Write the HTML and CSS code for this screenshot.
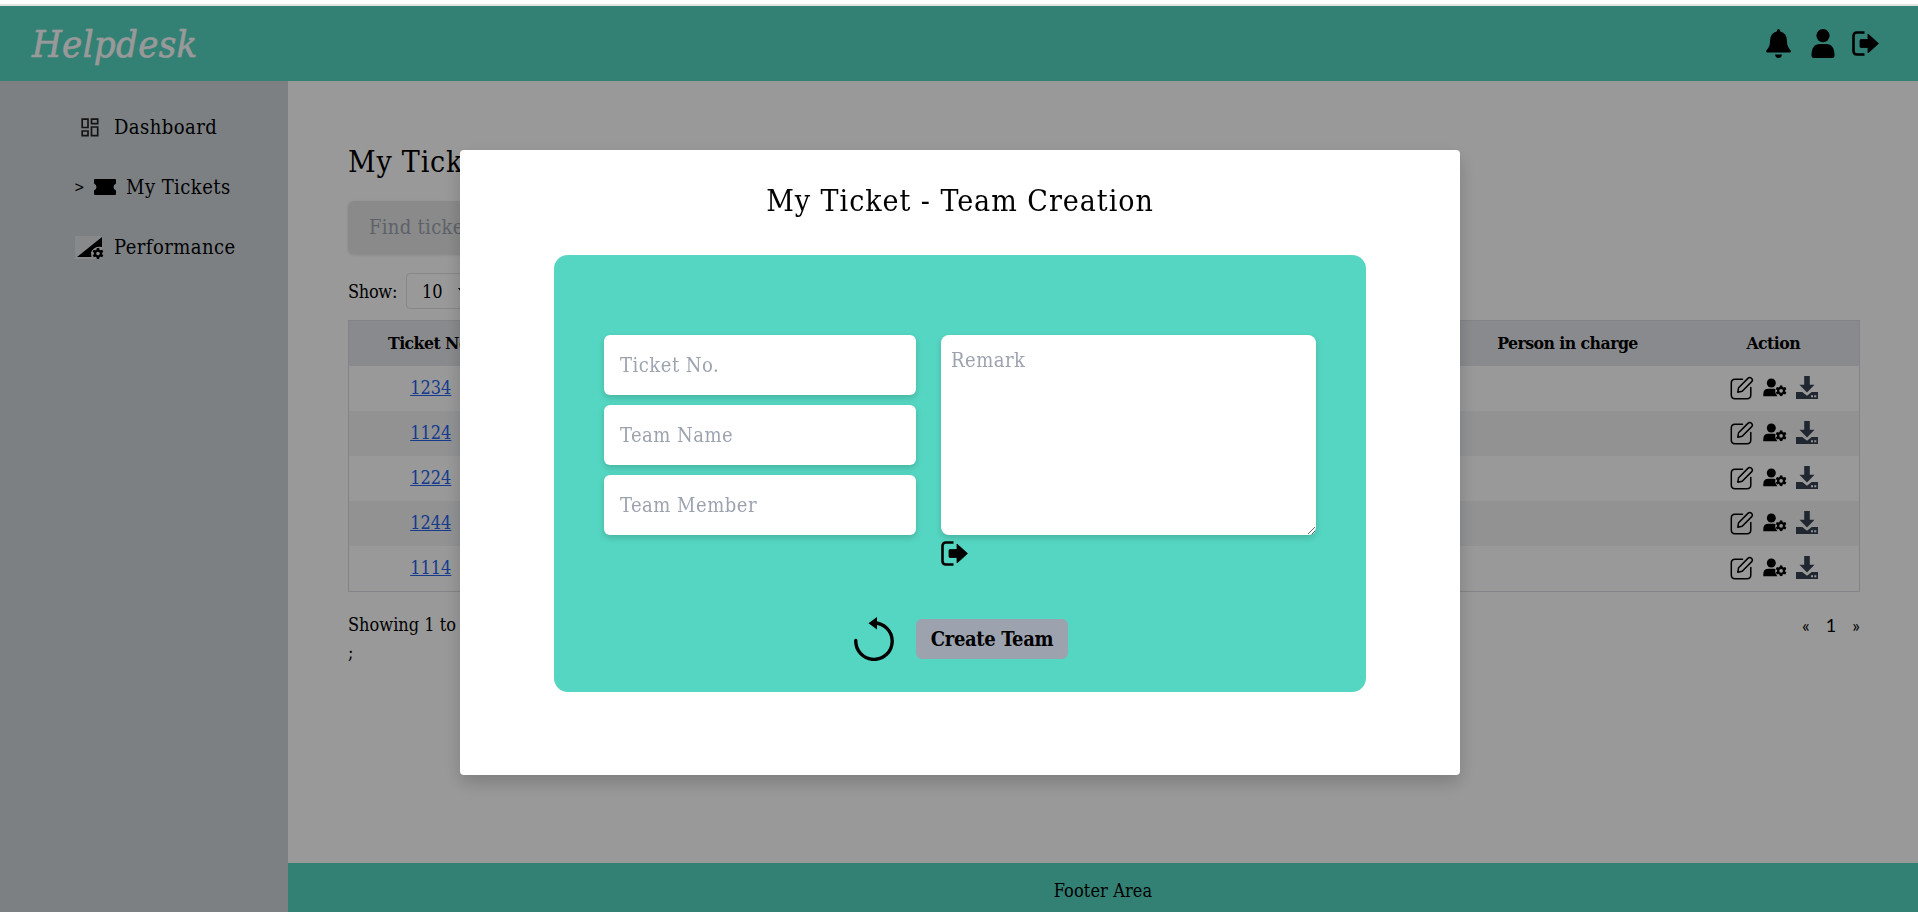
FILE: index.html
```html
<!DOCTYPE html>
<html lang="en">
<head>
<meta charset="utf-8">
<title>Helpdesk</title>
<link rel="stylesheet" href="styles.css">
</head>
<body>
<svg class="defs" width="0" height="0">
  <symbol id="i-logout" viewBox="0 0 27 25"><path d="M12.500 1.500H5Q1.500 1.500 1.500 5V20Q1.500 23.500 5 23.500H12.500" fill="none" stroke="#000" stroke-width="2.600"/><path d="M9 8.500H16V3L26.500 12.500 16 22V16.500H9Q8 16.500 8 15.500V9.500Q8 8.500 9 8.500Z" stroke="#000" stroke-linejoin="round" stroke-width=".8"/></symbol>
  <symbol id="i-edit" viewBox="0 0 24 24"><path d="M12.500 3.200H5Q1.300 3.200 1.300 7V19Q1.300 22.700 5 22.700H17Q20.800 22.700 20.800 19V11.500" fill="none" stroke="#000" stroke-width="1.500" stroke-linecap="round"/><path d="M7.800 16.200 8.600 11.700 17.900 2.400Q19.700 .6 21.500 2.300 23.300 4.100 21.500 5.900L12.200 15.300Z" fill="none" stroke="#000" stroke-width="1.500" stroke-linejoin="round"/></symbol>
  <symbol id="i-gear" viewBox="0 0 24 24"><path fill-rule="evenodd" d="M9.500 0h5l.8 3.600 2.300 1.300 3.500-1.100 2.500 4.300-2.700 2.500v2.800l2.700 2.500-2.500 4.300-3.500-1.100-2.300 1.300-.8 3.600h-5l-.8-3.600-2.300-1.300-3.500 1.100-2.500-4.300 2.700-2.500v-2.800L.4 8.100l2.500-4.300 3.500 1.100 2.300-1.300ZM12 8a4 4 0 1 0 0 8 4 4 0 0 0 0-8Z"/></symbol>
  <symbol id="i-users" viewBox="0 0 24 20"><circle cx="8.300" cy="5" r="4.500"/><path d="M.3 18.300V16Q.3 10.800 5.500 10.800H11Q12.500 10.800 12.600 11.500 11.300 14.500 14.500 18.300Z"/><use href="#i-gear" x="12.600" y="7.300" width="11" height="11"/></symbol>
  <symbol id="i-download" viewBox="0 0 22 23"><path d="M8.200 0h5.600v8.800h4.700L11 16.500 3.500 8.800h4.700Z"/><path fill-rule="evenodd" d="M0 16h6.300l4.700 3.800 4.700-3.800H22v7H0ZM15 19.300v1.900h2v-1.900ZM18.300 19.300v1.900h2v-1.900Z"/></symbol>
</svg>

<header class="topbar">
  <div class="brand">Helpdesk</div>
  <div class="topicons">
    <svg class="bell" width="25" height="29" viewBox="0 0 25 29"><path d="M12.500 0Q14.300 0 14.300 2.500 20.800 4 20.900 11.500 21 18 24.500 21.300 25.500 23.300 23.500 23.500H1.500Q-.5 23.300 .5 21.300 4 18 4.100 11.500 4.200 4 10.700 2.500 10.700 0 12.500 0Z"/><path d="M9 25.500h7Q15.500 29 12.500 29 9.500 29 9 25.500Z"/></svg>
    <svg width="24" height="29" viewBox="0 0 24 29"><circle cx="12" cy="6.600" r="6.600"/><path d="M.5 26.500Q.5 15 9 15H15Q23.500 15 23.500 26.500 23.500 29 21 29H3Q.5 29 .5 26.500Z"/></svg>
    <svg width="27" height="25"><use href="#i-logout"/></svg>
  </div>
</header>

<div class="shell">
  <nav class="sidebar">
    <a class="nav dash"><svg width="18" height="19" viewBox="0 0 18 19" fill="none" stroke="#222" stroke-width="1.700"><path d="M1.200 1.200H7V9.500H1.200ZM10.500 1.200H16.700V5.700H10.500ZM1.200 13H7V17.700H1.200ZM10.500 9H16.700V17.700H10.500Z"/></svg><span>Dashboard</span></a>
    <a class="nav tick"><b class="mark">&gt;</b><svg width="22" height="16" viewBox="0 0 22 16"><path d="M1 0h20Q22 0 22 1V4.500Q19.500 5.500 19.500 8T22 11.500V15Q22 16 21 16H1Q0 16 0 15V11.500Q2.500 10.500 2.500 8T0 4.500V1Q0 0 1 0Z"/></svg><span>My Tickets</span></a>
    <a class="nav perf"><svg width="29" height="23" viewBox="0 0 29 23"><path fill="#e3e5e8" d="M0 0h27v23H0Z"/><path d="M27 1V11Q18.500 10 16 16.500L16.500 21H2Z"/><use href="#i-gear" x="17" y="12" width="12" height="11"/></svg><span>Performance</span></a>
  </nav>

  <div class="content">
    <main class="page">
      <h1 class="heading">My Tickets</h1>
      <input class="search" placeholder="Find ticket">
      <div class="show"><span>Show:</span><div class="select"><span>10</span><svg width="9" height="6" viewBox="0 0 9 6"><path d="M0 0h9L4.500 6Z"/></svg></div></div>
      <table class="tickets">
        <thead><tr><th class="c-no">Ticket No.</th><th></th><th class="c-person"><span>Person in charge</span></th><th class="c-action">Action</th></tr></thead>
        <tbody>
          <tr><td><a>1234</a></td><td></td><td></td><td><div class="acts"><svg class="edit"><use href="#i-edit"/></svg><svg class="users"><use href="#i-users"/></svg><svg class="down"><use href="#i-download"/></svg></div></td></tr>
          <tr><td><a>1124</a></td><td></td><td></td><td><div class="acts"><svg class="edit"><use href="#i-edit"/></svg><svg class="users"><use href="#i-users"/></svg><svg class="down"><use href="#i-download"/></svg></div></td></tr>
          <tr><td><a>1224</a></td><td></td><td></td><td><div class="acts"><svg class="edit"><use href="#i-edit"/></svg><svg class="users"><use href="#i-users"/></svg><svg class="down"><use href="#i-download"/></svg></div></td></tr>
          <tr><td><a>1244</a></td><td></td><td></td><td><div class="acts"><svg class="edit"><use href="#i-edit"/></svg><svg class="users"><use href="#i-users"/></svg><svg class="down"><use href="#i-download"/></svg></div></td></tr>
          <tr><td><a>1114</a></td><td></td><td></td><td><div class="acts"><svg class="edit"><use href="#i-edit"/></svg><svg class="users"><use href="#i-users"/></svg><svg class="down"><use href="#i-download"/></svg></div></td></tr>
        </tbody>
      </table>
      <div class="pager"><span class="info">Showing 1 to 5</span><div class="pages"><span>«</span><span>1</span><span>»</span></div></div>
      <div class="semi">;</div>
    </main>
    <footer class="footer">Footer Area</footer>
  </div>
</div>

<div class="overlay">
  <section class="modal">
    <h2 class="title">My Ticket - Team Creation</h2>
    <form class="panel">
      <div class="fields">
        <div class="left">
          <input class="field" placeholder="Ticket No.">
          <input class="field" placeholder="Team Name">
          <input class="field" placeholder="Team Member">
        </div>
        <div class="right">
          <textarea class="remark" placeholder="Remark"></textarea>
          <svg width="27" height="25"><use href="#i-logout"/></svg>
        </div>
      </div>
      <div class="buttons">
        <svg width="40" height="44" viewBox="0 0 40 44"><path d="M1.800 23.500A18.200 18.200 0 1 0 20 6" fill="none" stroke="#000" stroke-width="3.400" stroke-linecap="round"/><path d="M14.500 6.300 23 0V12.500Z"/></svg>
        <button type="button" class="create">Create Team</button>
      </div>
    </form>
  </section>
</div>
</body>
</html>
```

FILE: styles.css
```css
* { box-sizing: border-box; }
body {
  margin: 0;
  height: 912px;
  overflow: hidden;
  display: flex;
  flex-direction: column;
  background: #fff;
  color: #000;
  font-family: "DejaVu Serif Condensed", "DejaVu Serif", serif;
  font-stretch: condensed;
  font-size: 18px;
}
input, textarea, button { font: inherit; border: 0; outline: 0; }
svg { display: block; flex: none; }
.defs { position: absolute; }

.topbar {
  flex: none;
  height: 81px;
  border-top: 6px solid #fff;
  padding: 0 39px 0 32px;
  background: #55d6c2;
  display: flex;
  justify-content: space-between;
  align-items: center;
}
.brand { color: #fff; font-size: 38px; font-style: italic; letter-spacing: .3px; -webkit-text-stroke: .6px #fff; }
.topicons { display: flex; align-items: center; gap: 17px; }
.bell { margin-right: 3px; }

.shell { flex: 1; display: flex; min-height: 0; }
.sidebar { width: 288px; background: #d1d5db; padding-top: 16px; }
.nav { height: 60px; display: flex; align-items: center; font-size: 20px; letter-spacing: .45px; }
.dash { padding-left: 81px; gap: 15px; }
.tick { padding-left: 74px; }
.perf { padding-left: 75px; gap: 10px; }
.tick svg { margin: 0 10px 0 10px; }
.mark { font-size: 14px; font-weight: normal; width: 10px; }

.content { flex: 1; display: flex; flex-direction: column; }
.page { flex: 1; padding: 61px 58px 0 60px; }
.heading { margin: 0 0 19px; font-size: 30px; line-height: 40px; font-weight: normal; letter-spacing: .8px; }
.search {
  display: block;
  width: 400px;
  height: 53px;
  padding: 0 21px 2px;
  border-radius: 6px;
  background: #e7e7e7;
  box-shadow: 0 1px 3px rgba(0, 0, 0, .12);
  font-size: 20px;
  letter-spacing: .3px;
}
::placeholder { color: #9ca3af; opacity: 1; }
.show { display: flex; align-items: center; gap: 8px; height: 36px; margin: 19px 0 11px; }
.show > span { width: 50px; letter-spacing: -.3px; }
.select {
  width: 70px;
  height: 36px;
  padding: 0 8px 0 15px;
  border: 1px solid #dfe1e5;
  border-radius: 4px;
  display: flex;
  align-items: center;
  justify-content: space-between;
}
.tickets { width: 1512px; border-collapse: collapse; table-layout: fixed; border: 1px solid #d9dce1; text-align: center; }
.tickets th, .tickets td { padding: 0 0 1px; height: 45px; }
.tickets th { height: 45px; padding: 0; background: #e5e7eb; font-size: 17.5px; font-weight: bold; letter-spacing: -.55px; }
.tickets thead tr { background: #e5e7eb; }
.tickets tbody tr:nth-child(even) { background: #f3f4f6; }
.tickets a { color: #2563eb; text-decoration: underline; }
.c-no { width: 164px; }
.c-person { width: 240px; }
.c-action { width: 172px; }
.acts { display: flex; justify-content: center; align-items: center; gap: 9px; height: 44px; padding-left: 1px; }
.edit { width: 24px; height: 24px; }
.users { width: 24px; height: 20px; }
.down { width: 22px; height: 23px; fill: #374151; }
.pager { display: flex; justify-content: space-between; line-height: 28px; margin-top: 19px; }
.pages { display: flex; gap: 16px; font-family: Lato, sans-serif; }
.semi { line-height: 28px; }
.footer { flex: none; height: 49px; background: #55d6c2; text-align: center; padding-top: 7px; line-height: 42px; letter-spacing: .1px; }

.overlay {
  position: fixed;
  inset: 4px 0 0;
  border-top: 2px solid rgba(0, 0, 0, .11);
  background: rgba(0, 0, 0, .4);
  background-clip: padding-box;
  display: flex;
  justify-content: center;
  align-items: flex-start;
  padding: 144px 0 0 2px;
}
.modal {
  width: 1000px;
  height: 625px;
  background: #fff;
  border-radius: 4px;
  box-shadow: 0 8px 18px rgba(0, 0, 0, .18);
}
.title { margin: 31px 0 34px; font-size: 30px; font-weight: normal; line-height: 40px; text-align: center; letter-spacing: .98px; }
.panel {
  width: 812px;
  height: 437px;
  margin: 0 auto;
  padding: 80px 50px 0;
  border-radius: 14px;
  background: #55d6c2;
}
.fields { display: flex; gap: 25px; }
.left { width: 312px; display: flex; flex-direction: column; gap: 10px; }
.right { width: 375px; display: flex; flex-direction: column; gap: 6px; }
.field, .remark {
  background: #fff;
  border-radius: 6px;
  box-shadow: 0 3px 6px rgba(0, 0, 0, .16);
  font-size: 20px;
  letter-spacing: .5px;
}
.field { height: 60px; padding: 0 16px; }
.remark { width: 375px; height: 200px; padding: 13px 10px; border-radius: 8px; }
.buttons { display: flex; align-items: center; margin: 51px 0 0 250px; gap: 22px; }
.create {
  width: 152px;
  height: 40px;
  padding: 0 0 1px;
  border-radius: 6px;
  background: #9ca3af;
  font-size: 20px;
  font-weight: bold;
  letter-spacing: -.35px;
}
```
